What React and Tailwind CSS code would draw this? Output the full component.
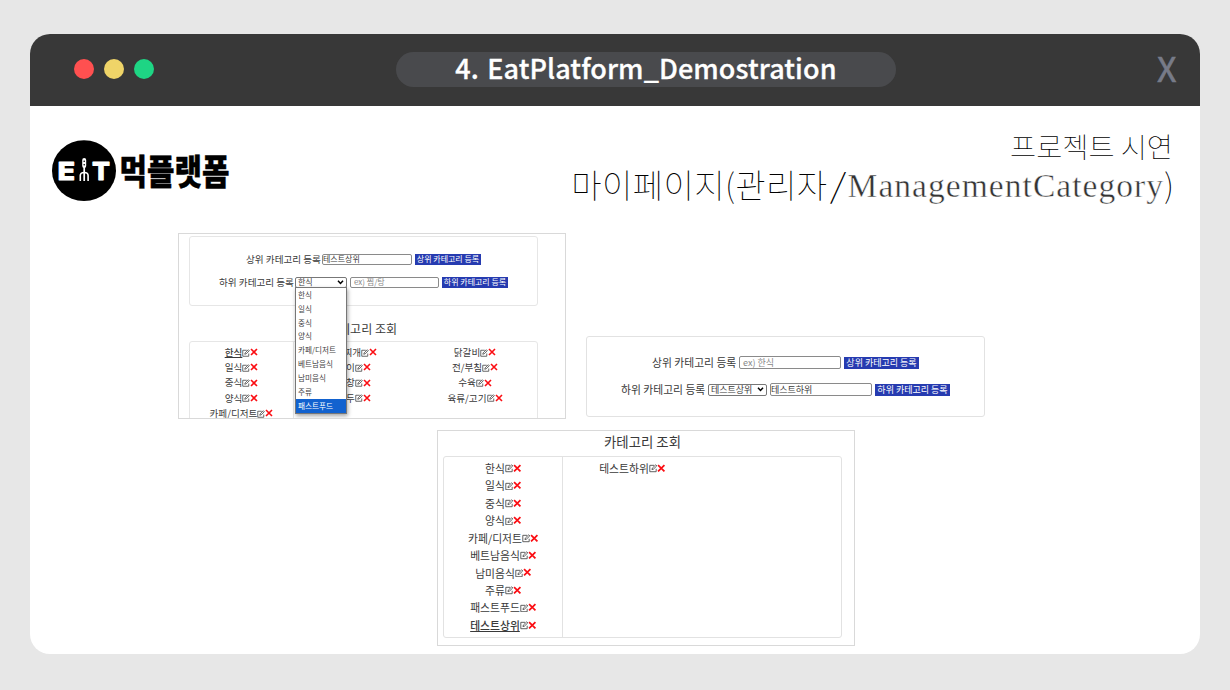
import React from "react";

const KR = "font-['Noto_Sans_CJK_KR',sans-serif]";

function EditIcon({ className }) {
  return (
    <svg viewBox="0 0 16 16" className={className} fill="none" stroke="#444" strokeWidth="1.6">
      <path d="M9.5 2.5H1.5v12h12V9" />
      <path d="M5.5 10.5l.8-2.8 6.4-6.2 2 2-6.4 6.2z" />
    </svg>
  );
}

function CrossIcon({ className }) {
  return (
    <svg viewBox="0 0 16 16" className={className} fill="none" stroke="#fb0d12" strokeWidth="3.2">
      <path d="M2 2l12 12M14 2l-12 12" />
    </svg>
  );
}

function Item({ name, active, small }) {
  return (
    <li className={small ? "flex h-[15.3px] items-center justify-center" : "flex h-[17.45px] items-center justify-center"}>
      <span className={active ? "font-medium underline underline-offset-1" : ""}>{name}</span>
      <EditIcon className={small ? "mt-px size-[8px] shrink-0" : "mt-px size-[8.5px] shrink-0"} />
      <CrossIcon className={small ? "size-[8px] shrink-0" : "size-[8.5px] shrink-0"} />
    </li>
  );
}

function Chevron() {
  return (
    <svg viewBox="0 0 8 6" className="h-[5px] w-[7px] shrink-0" fill="none" stroke="#000" strokeWidth="1.8">
      <path d="M1 1l3 3.2L7 1" />
    </svg>
  );
}

function Logo() {
  return (
    <svg viewBox="0 0 190 62" className="h-[62px] w-[190px] overflow-visible">
      <ellipse cx="32" cy="30.7" rx="32" ry="30.4" fill="#000" />
      <g fill="#fff" stroke="#fff" strokeWidth=".8" strokeLinejoin="round" fontSize="25" fontWeight="800" fontFamily="Inter, sans-serif">
        <text x="5.4" y="40.3" textLength="17.6" lengthAdjust="spacingAndGlyphs">E</text>
        <text x="40" y="40.3" textLength="18" lengthAdjust="spacingAndGlyphs">T</text>
      </g>
      <g fill="none" stroke="#fff">
        <path d="M32.2 20v6" strokeWidth="4" strokeLinecap="round" />
        <path d="M32.2 27v14" strokeWidth="1.7" />
        <path d="M28.3 41v-5.5q0-3 3.9-3t3.9 3v5.5" strokeWidth="1.6" />
      </g>
      <circle cx="32.2" cy="21.3" r=".8" fill="#000" />
      <circle cx="32.2" cy="24.8" r=".8" fill="#000" />
      <text x="67.5" y="45.4" fontSize="35.5" fontWeight="900" textLength="110" lengthAdjust="spacingAndGlyphs" fill="#000" stroke="#000" strokeWidth=".4" strokeLinejoin="round" fontFamily="'Noto Sans CJK KR', sans-serif">먹플랫폼</text>
    </svg>
  );
}

const options = ["한식", "일식", "중식", "양식", "카페/디저트", "베트남음식", "남미음식", "주류", "패스트푸드"];

function FormWithMenu() {
  return (
    <section className="h-[186px] w-[388px] overflow-hidden border border-[#d9d9d9] pt-[2px] pl-[10px] text-[9.6px] text-[#3a3a3a]">
      <div className="h-[70px] w-[349px] rounded-[3px] border border-[#e6e6e6] pt-[16px]">
        <div className="ml-[56px] flex h-[12px] items-center">
          <span className="w-[76px] whitespace-nowrap">상위 카테고리 등록</span>
          <span className="flex h-[11px] w-[90px] items-center rounded-[2px] border border-[#8a8a8a] text-[8px]">테스트상위</span>
          <span className="ml-[3px] flex h-[11px] w-[66px] items-center justify-center whitespace-nowrap bg-[#263bb0] text-[8px] text-white">상위 카테고리 등록</span>
        </div>
        <div className="mt-[11px] ml-[29px] flex h-[12px] items-center">
          <span className="w-[76px] whitespace-nowrap">하위 카테고리 등록</span>
          <div className="relative h-[11px] w-[52px]">
            <div className="flex h-[11px] items-center justify-between rounded-[2px] border border-[#777] px-[2px] text-[8px]">
              한식
              <Chevron />
            </div>
            <ul className="absolute top-[10px] left-0 z-10 w-[52px] border border-[#777] bg-white text-[7.6px] text-[#444] shadow-[1px_2px_4px_rgba(0,0,0,0.35)]">
              {options.map((o, i) => (
                <li key={o} className={i === 8 ? "flex h-[13.9px] items-center bg-[#1262cf] pl-[2px] text-white" : "flex h-[13.9px] items-center pl-[2px]"}>{o}</li>
              ))}
            </ul>
          </div>
          <span className="ml-[3px] flex h-[11px] w-[89px] items-center rounded-[2px] border border-[#8a8a8a] pl-[3px] text-[8px] text-[#888]">ex) 찜/탕</span>
          <span className="ml-[3px] flex h-[11px] w-[66px] items-center justify-center whitespace-nowrap bg-[#263bb0] text-[8px] text-white">하위 카테고리 등록</span>
        </div>
      </div>
      <h3 className="mt-[14px] w-[347px] text-center text-[12px] leading-[18px]">카테고리 조회</h3>
      <div className="mt-[3px] flex h-[90px] w-[349px] rounded-[3px] border border-[#e6e6e6]">
        <ul className="w-[104px] border-r border-[#e6e6e6] pt-[2.4px]">
          {options.slice(0, 5).map((o, i) => <Item key={o} name={o} active={i === 0} small />)}
        </ul>
        <ul className="w-[120px] pt-[2.4px]">
          {["국/찌개", "구이", "곱창", "만두"].map((o) => <Item key={o} name={o} small />)}
        </ul>
        <ul className="w-[122px] pt-[2.4px]">
          {["닭갈비", "전/부침", "수육", "육류/고기"].map((o) => <Item key={o} name={o} small />)}
        </ul>
      </div>
    </section>
  );
}

function RegisterForm() {
  return (
    <section className="mt-[103px] ml-[20px] h-[81px] w-[399px] rounded-[3px] border border-[#e2e2e2] pt-[19px] text-[10.8px] text-[#3a3a3a]">
      <div className="ml-[65px] flex h-[13px] items-center">
        <span className="w-[87px] whitespace-nowrap">상위 카테고리 등록</span>
        <span className="flex h-[13px] w-[102px] items-center rounded-[2px] border border-[#8a8a8a] pl-[3px] text-[9px] text-[#888]">ex) 한식</span>
        <span className="ml-[3px] flex h-[12px] w-[75px] items-center justify-center whitespace-nowrap bg-[#263bb0] text-[9px] text-white">상위 카테고리 등록</span>
      </div>
      <div className="mt-[14px] ml-[34px] flex h-[13px] items-center">
        <span className="w-[87px] whitespace-nowrap">하위 카테고리 등록</span>
        <span className="flex h-[12px] w-[59px] items-center justify-between rounded-[2px] border border-[#777] px-[2px] text-[9px]">
          테스트상위
          <Chevron />
        </span>
        <span className="ml-[3px] flex h-[13px] w-[102px] items-center rounded-[2px] border border-[#8a8a8a] text-[9px]">테스트하위</span>
        <span className="ml-[3px] flex h-[12px] w-[75px] items-center justify-center whitespace-nowrap bg-[#263bb0] text-[9px] text-white">하위 카테고리 등록</span>
      </div>
    </section>
  );
}

function CategoryList() {
  return (
    <section className="mt-[11px] ml-[407px] h-[216px] w-[418px] border border-[#d9d9d9] pl-[5px] text-[10.8px] text-[#3a3a3a]">
      <h3 className="w-[399px] text-center text-[13.4px] leading-[20px]">카테고리 조회</h3>
      <div className="mt-[5px] flex h-[182px] w-[399px] rounded-[3px] border border-[#e2e2e2]">
        <ul className="w-[119px] border-r border-[#e2e2e2] pt-[2.3px] pl-px">
          {[...options, "테스트상위"].map((o, i) => <Item key={o} name={o} active={i === 9} />)}
        </ul>
        <ul className="w-[139px] pt-[2.3px]">
          <Item name="테스트하위" />
        </ul>
      </div>
    </section>
  );
}

export default function App() {
  return (
    <div className={`h-[690px] w-[1230px] overflow-hidden bg-[#e7e7e7] px-[30px] pt-[34px] ${KR}`}>
      <main className="h-[620px] overflow-hidden rounded-[20px] bg-white">
        <header className="flex h-[72px] items-center bg-[#383838] pl-[44px]">
          <div className="flex gap-[10px] pb-[2px]">
            <span className="size-[20px] rounded-full bg-[#ff5050]" />
            <span className="size-[20px] rounded-full bg-[#efd468]" />
            <span className="size-[20px] rounded-full bg-[#1ed584]" />
          </div>
          <h1 className="mb-[2px] ml-[242px] flex h-[35px] w-[500px] items-center justify-center rounded-full bg-[#494a4d] pb-[2px] text-[27px] font-medium tracking-[0.1px] whitespace-nowrap text-white [word-spacing:2px] [-webkit-text-stroke:0.3px_white]">
            4. EatPlatform_Demostration
          </h1>
          <span className="mb-[4px] ml-[261px] text-[34px] leading-none text-[#777b88] [-webkit-text-stroke:0.6px_#777b88]">X</span>
        </header>
        <div className="flex h-[127px] justify-between pt-[34px] pl-[22px]">
          <Logo />
          <div className="-mt-[14px] pr-[26px] text-right font-thin text-black">
            <p className="pr-px text-[28.4px] leading-[40px] whitespace-nowrap">프로젝트 시연</p>
            <p className="flex items-baseline justify-end text-[33px] leading-[36px] whitespace-nowrap">
              <span className="tracking-[0.4px]">마이페이지(관리자</span>
              <span className="w-[20px] scale-x-125 text-center">/</span>
              <span className="-translate-y-px font-['Liberation_Serif',serif] text-[33.5px] tracking-[1.05px] text-[#333] [-webkit-text-stroke:0.45px_white]">ManagementCategory</span>
              <span>)</span>
            </p>
          </div>
        </div>
        <div className="flex pl-[148px]">
          <FormWithMenu />
          <RegisterForm />
        </div>
        <CategoryList />
      </main>
    </div>
  );
}
